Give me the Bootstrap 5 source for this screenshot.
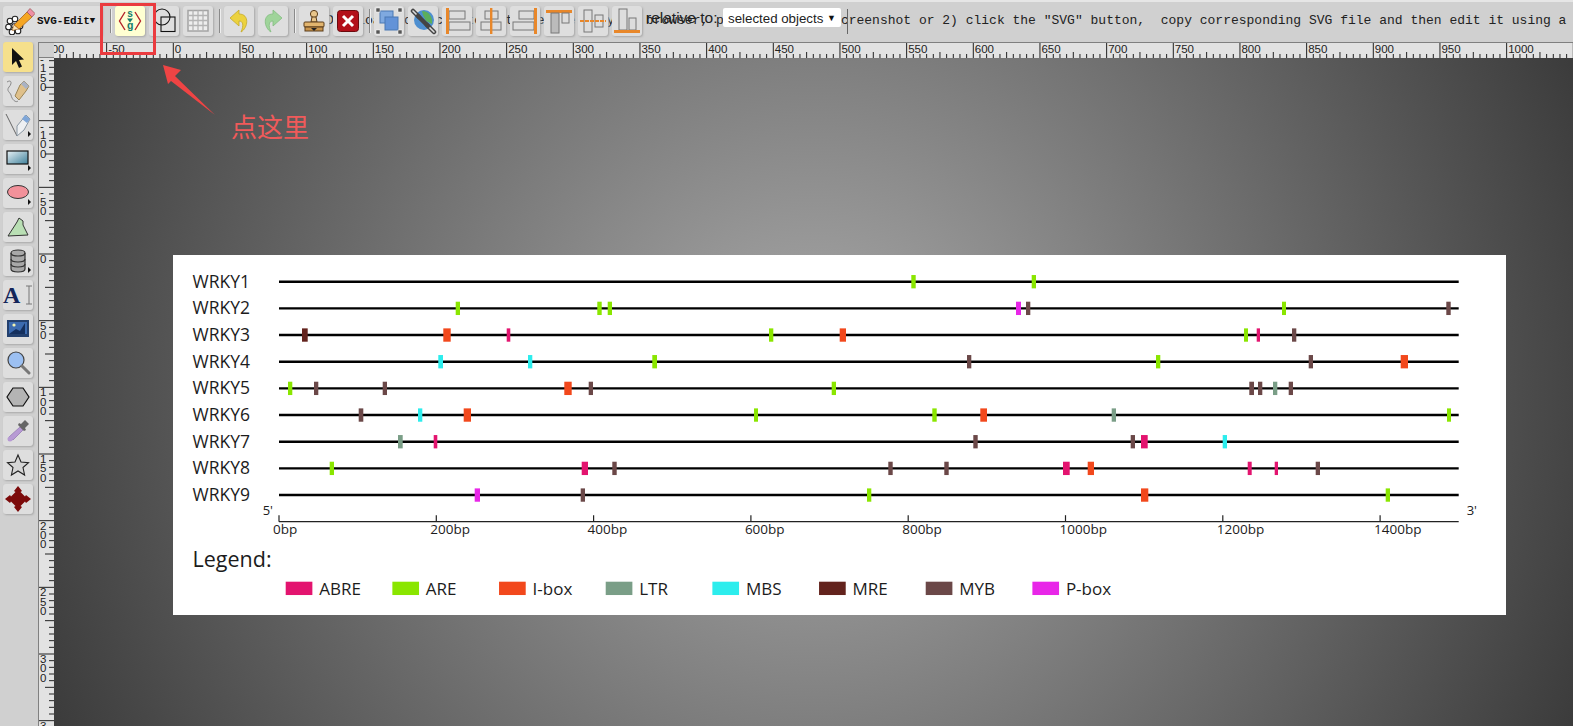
<!DOCTYPE html>
<html lang="en">

<head>
    <meta charset="UTF-8">
    <meta name="viewport" content="width=device-width, initial-scale=1.0">
    <title>SVG-Edit</title>
    <link href="https://cdn.jsdelivr.net/npm/bootstrap@5.3.0/dist/css/bootstrap.min.css" rel="stylesheet">
    <script src="https://cdn.jsdelivr.net/npm/bootstrap@5.3.0/dist/js/bootstrap.bundle.min.js"></script>
    <style>
        body {
            background: #d0d0d0;
            font-family: "Liberation Sans", sans-serif;
        }

        .editor-top {
            height: 42px;
            padding: 4px 0 0 3px;
            border-top: 2px solid #e6e6e6;
        }

        .behind-text {
            left: 326px;
            top: 11px;
            font: 13px/16px "Liberation Mono", monospace;
            color: #222;
            white-space: pre;
        }

        .text-caret {
            left: 847px;
            top: 7px;
            width: 1px;
            height: 25px;
            background: #666;
        }

        .tb-btn {
            width: 30px;
            height: 30px;
            flex: none;
            padding: 0;
            border: 0;
            border-radius: 3px;
            background: #dedede;
            box-shadow: 1px 1px 2px #a8a8a8;
            z-index: 1;
        }

        .tb-btn svg {
            display: block;
            margin: 0 auto;
        }

        .tb-logo {
            width: 99px;
            color: #111;
            font: bold 11px "Liberation Mono", monospace;
        }

        .tb-logo svg {
            margin: 0 2px 0 2px;
        }

        .tb-on-pale {
            background: #ffffd2;
        }

        .tb-on {
            background: #f6e08c;
        }

        .has-flyout::after {
            content: "";
            position: absolute;
            right: 2px;
            bottom: 3px;
            border-left: 3px solid #111;
            border-top: 3px solid transparent;
            border-bottom: 3px solid transparent;
        }

        .tb-sep {
            width: 1px;
            height: 24px;
            margin: 3px 0 0 2px;
            background: #8a8a8a;
            box-shadow: 1px 0 0 #eee;
            z-index: 1;
        }

        .tb-sep-first {
            margin-left: 4px;
        }

        .rel-label {
            width: 73px;
            margin-top: 5px;
            font-size: 15.5px;
            line-height: 14px;
            color: #222;
            white-space: nowrap;
            z-index: 1;
        }

        .rel-select {
            width: 118px;
            height: 19px;
            margin-top: 2px;
            padding: 0 5px;
            background: #fff;
            border-radius: 2px;
            font-size: 13.3px;
            line-height: 21px;
            color: #222;
            z-index: 1;
        }

        .rel-arrow {
            font-size: 9px;
            color: #111;
        }

        .tool-col {
            width: 38px;
            padding-left: 3px;
            gap: 4px;
        }

        .tool-letter {
            font: bold 24px/26px "Liberation Serif", serif;
            color: #14265a;
        }

        .corner-box {
            width: 16px;
            height: 16px;
            background: #d0d0d0;
            border-top: 1px solid #808080;
            border-left: 1px solid #808080;
            border-bottom: 1px solid #808080;
        }

        .ruler-h {
            height: 16px;
            background: #e2e2e2;
            border-top: 1px solid #808080;
        }

        .ruler-v {
            width: 16px;
            background: #e2e2e2;
            border-left: 1px solid #808080;
        }

        .ruler-h svg,
        .ruler-v svg {
            display: block;
        }

        .ruler-txt {
            font: 11.5px "Liberation Sans", sans-serif;
            fill: #222;
        }

        .work-canvas {
            background: radial-gradient(circle at 50% 50%, #acacac 0, #3a3a3a 840px);
            padding: 197px 0 0 119px;
        }

        .chart-sheet {
            width: 1333px;
            height: 360px;
            background: #fff;
        }

        .chart-sheet svg {
            display: block;
        }

        .chart-txt {
            font-family: "Open Sans", sans-serif;
            fill: #1c1c1c;
        }

        .note-box {
            left: 100px;
            top: 3px;
            width: 56px;
            height: 52px;
            border: 3px solid #ea3b3f;
            z-index: 5;
        }

        .note-arrow {
            left: 0;
            top: 0;
            z-index: 5;
        }

        .note-text {
            left: 231px;
            top: 109px;
            font: 26px/34px "Noto Sans CJK SC", sans-serif;
            color: #f05a5a;
            z-index: 5;
        }
    </style>
</head>

<body class="overflow-hidden">

    <div class="d-flex flex-column vh-100 position-relative">

        <!-- top toolbar -->
        <div class="editor-top d-flex gap-1 position-relative flex-shrink-0">
            <div class="behind-text position-absolute">Download to local to get the one in your browser, press 1) print screenshot or 2) click the "SVG" button,  copy corresponding SVG file and then edit it using a</div>
            <div class="text-caret position-absolute"></div>

            <button class="btn tb-btn tb-logo d-flex align-items-center position-relative">
                <svg width="30" height="28" viewBox="0 0 30 28">
                    <g fill="#fff" stroke="#222" stroke-width="1.1">
                        <circle cx="5" cy="14" r="2.8" />
                        <circle cx="3.5" cy="20" r="2.8" />
                        <circle cx="7" cy="25" r="2.8" />
                        <circle cx="13" cy="24" r="2.8" />
                        <circle cx="15" cy="19" r="2.8" />
                        <circle cx="10" cy="12" r="2.8" />
                        <circle cx="9" cy="19" r="2.2" />
                    </g>
                    <path d="M9 18 L22 5 L27 10 L14 22 Z" fill="#f5a623" stroke="#a8641e" stroke-width=".8" />
                    <path d="M22 5 L25 1.5 L30 6.5 L27 10 Z" fill="#ef8fa5" stroke="#a05a5a" stroke-width=".8" />
                    <path d="M9 18 L7 23.5 L14 22 Z" fill="#f9e2b5" stroke="#a8641e" stroke-width=".6" />
                </svg>
                <span>SVG-Edit</span><span class="rel-arrow">&#9660;</span>
            </button>
            <div class="tb-sep tb-sep-first"></div>

            <button class="btn tb-btn tb-on-pale position-relative">
                <svg width="30" height="30" viewBox="0 0 30 30">
                    <path d="M10 6 L4.5 15 L10 24 M20 6 L25.5 15 L20 24" fill="none" stroke="#b5232a" stroke-width="1.4" />
                    <text x="15" y="11" text-anchor="middle" font-size="10" font-weight="700" font-family="Liberation Mono" fill="#167d6c">s</text>
                    <path d="M12 12.5 H18 L15 16.5 Z" fill="#167d6c" />
                    <text x="15" y="23" text-anchor="middle" font-size="11" font-weight="700" font-family="Liberation Mono" fill="#167d6c">g</text>
                </svg>
            </button>
            <button class="btn tb-btn position-relative">
                <svg width="30" height="30" viewBox="0 0 30 30">
                    <circle cx="13" cy="11" r="8" fill="none" stroke="#111" stroke-width="1.1" />
                    <rect x="12" y="11" width="14" height="14.5" fill="none" stroke="#111" stroke-width="1.1" />
                </svg>
            </button>
            <button class="btn tb-btn position-relative">
                <svg width="30" height="30" viewBox="0 0 30 30">
                    <rect x="5" y="4.5" width="20" height="20.5" fill="#eee" stroke="#a4a4a4" stroke-width="1.5" />
                    <path d="M10 4.5 V25 M15 4.5 V25 M20 4.5 V25 M5 9.5 H25 M5 14.5 H25 M5 19.5 H25" stroke="#b4b4b4" stroke-width="1.3" />
                </svg>
            </button>
            <div class="tb-sep"></div>

            <button class="btn tb-btn position-relative">
                <svg width="26" height="26" viewBox="0 0 26 26">
                    <path d="M13 2 L4 10 L13 18 V13 C17 13 18 17 15 24 C22 20 24 6 13 6 Z" fill="#ecd23e" stroke="#c4a92a" stroke-width=".8" />
                </svg>
            </button>
            <button class="btn tb-btn position-relative">
                <svg width="26" height="26" viewBox="0 0 26 26">
                    <path d="M13 2 L22 10 L13 18 V13 C9 13 8 17 11 24 C4 20 2 6 13 6 Z" fill="#9fd49a" stroke="#84bd82" stroke-width=".8" />
                </svg>
            </button>
            <div class="tb-sep"></div>

            <button class="btn tb-btn position-relative">
                <svg width="26" height="26" viewBox="0 0 26 26">
                    <circle cx="13" cy="6" r="3.6" fill="#e8c58a" stroke="#5a3c1a" />
                    <path d="M11 9 H15 L16 14 H10 Z" fill="#e8c58a" stroke="#5a3c1a" />
                    <rect x="3" y="14" width="20" height="5" rx="1" fill="#e2b56e" stroke="#5a3c1a" />
                    <rect x="4" y="19" width="18" height="4" fill="#c9954d" stroke="#5a3c1a" />
                    <path d="M10 20 H16 L13 23 Z" fill="#222" />
                </svg>
            </button>
            <button class="btn tb-btn position-relative">
                <svg width="26" height="26" viewBox="0 0 26 26">
                    <rect x="2.5" y="2.5" width="21" height="21" rx="3" fill="#b3101a" stroke="#6b0a0e" />
                    <path d="M8 8 L18 18 M18 8 L8 18" stroke="#fff" stroke-width="3" />
                </svg>
            </button>
            <div class="tb-sep"></div>

            <button class="btn tb-btn position-relative">
                <svg width="28" height="28" viewBox="0 0 28 28">
                    <rect x="5" y="4" width="13" height="12" fill="#7fa9e0" stroke="#4a78b4" />
                    <rect x="10" y="10" width="13" height="13" fill="#6393d8" stroke="#4a78b4" />
                    <g fill="#555" stroke="#fff" stroke-width=".5">
                        <rect x="1" y="1" width="4" height="4" />
                        <rect x="23" y="1" width="4" height="4" />
                        <rect x="1" y="23" width="4" height="4" />
                        <rect x="23" y="23" width="4" height="4" />
                    </g>
                </svg>
            </button>
            <button class="btn tb-btn position-relative">
                <svg width="28" height="28" viewBox="0 0 28 28">
                    <circle cx="15" cy="13" r="10" fill="#4e8fd0" />
                    <path d="M13 4 C20 4 24 10 23 17 L17 14 L14 8 Z" fill="#5cae5c" />
                    <path d="M4 4 L10 10 M18 18 L25 25" stroke="#444" stroke-width="4.5" stroke-linecap="round" />
                    <path d="M4 4 L10 10 M18 18 L25 25" stroke="#ddd" stroke-width="1.6" stroke-linecap="round" />
                    <path d="M9 9 L19 19" stroke="#444" stroke-width="4.5" stroke-linecap="round" />
                </svg>
            </button>
            <button class="btn tb-btn position-relative">
                <svg width="28" height="28" viewBox="0 0 28 28">
                    <rect x="6" y="4" width="16" height="8" fill="#ddd" stroke="#777" />
                    <rect x="6" y="15" width="21" height="8" fill="#ddd" stroke="#777" />
                    <rect x="3" y="1" width="3" height="26" fill="#e8872a" />
                </svg>
            </button>
            <button class="btn tb-btn position-relative">
                <svg width="28" height="28" viewBox="0 0 28 28">
                    <rect x="8" y="4" width="13" height="8" fill="#ddd" stroke="#777" />
                    <rect x="4" y="15" width="20" height="8" fill="#ddd" stroke="#777" />
                    <rect x="13" y="1" width="2.4" height="26" fill="#e8872a" />
                </svg>
            </button>
            <button class="btn tb-btn position-relative">
                <svg width="28" height="28" viewBox="0 0 28 28">
                    <rect x="8" y="4" width="15" height="8" fill="#ddd" stroke="#777" />
                    <rect x="2" y="15" width="21" height="8" fill="#ddd" stroke="#777" />
                    <rect x="23" y="1" width="3" height="26" fill="#e8872a" />
                </svg>
            </button>
            <button class="btn tb-btn position-relative">
                <svg width="28" height="28" viewBox="0 0 28 28">
                    <rect x="1" y="3" width="26" height="3" fill="#e8872a" />
                    <rect x="6" y="6" width="8" height="20" fill="#bbb" stroke="#777" />
                    <rect x="17" y="6" width="7" height="10" fill="#ddd" stroke="#777" />
                </svg>
            </button>
            <button class="btn tb-btn position-relative">
                <svg width="28" height="28" viewBox="0 0 28 28">
                    <rect x="5" y="3" width="8" height="22" fill="#ddd" stroke="#777" />
                    <rect x="16" y="8" width="8" height="12" fill="#ddd" stroke="#777" />
                    <path d="M1 14 H27" stroke="#e8872a" stroke-width="2" stroke-dasharray="4 1" />
                </svg>
            </button>
            <button class="btn tb-btn position-relative">
                <svg width="28" height="28" viewBox="0 0 28 28">
                    <rect x="6" y="2" width="8" height="21" fill="#ddd" stroke="#777" />
                    <rect x="16" y="11" width="7" height="12" fill="#ddd" stroke="#777" />
                    <rect x="1" y="23" width="26" height="3" fill="#e8872a" />
                </svg>
            </button>

            <div class="rel-label position-relative">relative to:</div>
            <div class="rel-select d-flex justify-content-between position-relative">
                <span>selected objects</span><span class="rel-arrow">&#9660;</span>
            </div>
        </div>

        <div class="d-flex flex-grow-1 overflow-hidden">
            <!-- left tools -->
            <div class="tool-col d-flex flex-column flex-shrink-0">
                <button class="btn tb-btn tb-on">
                    <svg width="22" height="24" viewBox="0 0 22 24">
                        <path d="M5 3 V20 L9 16 L12 23 L15 21.5 L12 15 L17 14.5 Z" fill="#111" />
                    </svg>
                </button>
                <button class="btn tb-btn">
                    <svg width="28" height="28" viewBox="0 0 28 28">
                        <path d="M3 5 C8 2 8 7 5 10 C2 14 6 15 7 18 C8 23 12 26 14 24" fill="none" stroke="#888" />
                        <path d="M11 19 L16 8 L20 4 L25 9 L22 14 L15 23 Z" fill="#dfc08a" stroke="#9a8558" />
                        <path d="M17 7 L20 4 L25 9 L22 12 Z" fill="#a9b2c4" />
                    </svg>
                </button>
                <button class="btn tb-btn position-relative has-flyout">
                    <svg width="28" height="28" viewBox="0 0 28 28">
                        <path d="M2 3 L13 25" fill="none" stroke="#666" />
                        <path d="M13 25 L13 15 L22 4 L26 8 L20 19 Z" fill="#eef0f2" stroke="#8a97a3" />
                        <path d="M21 4 L26 8 L23 12 L18 8 Z" fill="#7ea6d8" />
                    </svg>
                </button>
                <button class="btn tb-btn position-relative has-flyout">
                    <svg width="24" height="22" viewBox="0 0 24 22">
                        <defs>
                            <linearGradient id="rectFill" x1="0" y1="0" x2="1" y2="1">
                                <stop offset="0" stop-color="#e9f2f6" />
                                <stop offset="1" stop-color="#3d7f99" />
                            </linearGradient>
                        </defs>
                        <rect x="1" y="3" width="21" height="13" fill="url(#rectFill)" stroke="#111" stroke-width="1.2" />
                    </svg>
                </button>
                <button class="btn tb-btn position-relative has-flyout">
                    <svg width="24" height="22" viewBox="0 0 24 22">
                        <ellipse cx="12" cy="10" rx="10.5" ry="6.5" fill="#f2919a" stroke="#333" />
                    </svg>
                </button>
                <button class="btn tb-btn">
                    <svg width="24" height="24" viewBox="0 0 24 24">
                        <path d="M2 21 L11 7 L13 3 L17 6 L17 10 L22 20 Z" fill="#b9dfb4" stroke="#333" />
                    </svg>
                </button>
                <button class="btn tb-btn position-relative has-flyout">
                    <svg width="24" height="26" viewBox="0 0 24 26">
                        <path d="M5 5 C5 1 19 1 19 5 V21 C19 25 5 25 5 21 Z" fill="#a8a8a8" stroke="#333" stroke-width="1.2" />
                        <path d="M5 5 C5 9 19 9 19 5 M5 11 C5 15 19 15 19 11 M5 16 C5 20 19 20 19 16" fill="none" stroke="#333" stroke-width="1.2" />
                    </svg>
                </button>
                <button class="btn tb-btn d-flex align-items-center justify-content-center gap-1">
                    <span class="tool-letter">A</span>
                    <svg width="6" height="20" viewBox="0 0 6 20">
                        <path d="M0 1 H6 M3 1 V19 M0 19 H6" stroke="#777" fill="none" />
                    </svg>
                </button>
                <button class="btn tb-btn">
                    <svg width="24" height="22" viewBox="0 0 24 22">
                        <rect x="1" y="2" width="22" height="17" fill="#23406e" />
                        <rect x="3" y="4" width="18" height="12" fill="#3c6bb0" />
                        <circle cx="8" cy="7" r="1.6" fill="#f2f2b0" />
                        <path d="M3 16 L10 11 L14 13 L19 5 L19 16 Z" fill="#15305e" />
                    </svg>
                </button>
                <button class="btn tb-btn">
                    <svg width="26" height="26" viewBox="0 0 26 26">
                        <circle cx="11" cy="10" r="8" fill="#9cc0f2" stroke="#444" stroke-width="1.2" />
                        <path d="M17 16 L24 23" stroke="#777" stroke-width="3" stroke-linecap="round" />
                    </svg>
                </button>
                <button class="btn tb-btn">
                    <svg width="24" height="24" viewBox="0 0 24 24">
                        <path d="M7 3 H17 L23 12 L17 21 H7 L1 12 Z" fill="#b4b4b4" stroke="#111" stroke-width="1.2" />
                    </svg>
                </button>
                <button class="btn tb-btn">
                    <svg width="24" height="24" viewBox="0 0 24 24">
                        <path d="M3 18 L14 8 L17 11 L7 21 Z" fill="#b79ad4" stroke="#a088bb" />
                        <circle cx="4" cy="20" r="2.5" fill="#b79ad4" />
                        <path d="M15 5 L19 1 L23 5 L19 9 L20 11 L18 12 L12 6 L13 4 Z" fill="#666" />
                    </svg>
                </button>
                <button class="btn tb-btn">
                    <svg width="24" height="24" viewBox="0 0 24 24">
                        <path d="M12 2 L15 9 L22.5 9.6 L17 14.5 L18.6 22 L12 18 L5.4 22 L7 14.5 L1.5 9.6 L9 9 Z" fill="#d6d6d6" stroke="#222" stroke-width="1.1" />
                    </svg>
                </button>
                <button class="btn tb-btn">
                    <svg width="26" height="26" viewBox="0 0 26 26">
                        <path d="M13 0 L17 5 L15.5 6 L20 10.5 L21 9 L26 13 L21 17 L20 15.5 L15.5 20 L17 21 L13 26 L9 21 L10.5 20 L6 15.5 L5 17 L0 13 L5 9 L6 10.5 L10.5 6 L9 5 Z" fill="#7c0a0a" />
                    </svg>
                </button>
            </div>

            <!-- rulers + canvas -->
            <div class="d-flex flex-column flex-grow-1 overflow-hidden">
                <div class="d-flex flex-shrink-0">
                    <div class="corner-box flex-shrink-0"></div>
                    <div class="ruler-h flex-grow-1 overflow-hidden" id="rulerTop"></div>
                </div>
                <div class="d-flex flex-grow-1 overflow-hidden">
                    <div class="ruler-v flex-shrink-0 overflow-hidden" id="rulerLeft"></div>
                    <div class="work-canvas flex-grow-1 overflow-hidden">
                        <div class="chart-sheet" id="chartSheet"></div>
                    </div>
                </div>
            </div>
        </div>

        <!-- red annotation on top of the screenshot -->
        <div class="note-box position-absolute"></div>
        <svg class="note-arrow position-absolute" width="230" height="125" viewBox="0 0 230 125">
            <path d="M163 65 L181 70 L175 76 L215 115 L171 81 L168 84 Z" fill="#ef4444" />
        </svg>
        <div class="note-text position-absolute">点这里</div>
    </div>

    <script>
        const SVGNS = "http://www.w3.org/2000/svg";

        function makeSvg(w, h) {
            const s = document.createElementNS(SVGNS, "svg");
            s.setAttribute("width", w);
            s.setAttribute("height", h);
            return s;
        }

        function add(parent, tag, attrs, text) {
            const el = document.createElementNS(SVGNS, tag);
            for (const k in attrs) el.setAttribute(k, attrs[k]);
            if (text !== undefined) el.textContent = text;
            parent.appendChild(el);
            return el;
        }

        // rulers: 50 units = 66.67px, unit 0 at page x 173.3 / y 254
        const MAJOR = 200 / 3;

        function drawTopRuler() {
            const s = makeSvg(1519, 15);
            for (let v = -100; v <= 1060; v += 5) {
                const x = 173.3 + v * MAJOR / 50 - 54;
                const big = v % 50 === 0;
                const mid = v % 25 === 0;
                const top = big ? 0 : mid ? 9 : 11;
                add(s, "line", { x1: x, x2: x, y1: top, y2: 15, stroke: "#222", "stroke-width": 1 });
                if (big) add(s, "text", { x: x + 1.5, y: 9.5, class: "ruler-txt" }, v);
            }
            document.getElementById("rulerTop").appendChild(s);
        }

        function drawLeftRuler() {
            const s = makeSvg(15, 668);
            for (let v = -150; v <= 360; v += 5) {
                const y = 254 + v * MAJOR / 50 - 58;
                const big = v % 50 === 0;
                const mid = v % 25 === 0;
                const left = big ? 0 : mid ? 6 : 10;
                add(s, "line", { x1: left, x2: 15, y1: y, y2: y, stroke: "#222", "stroke-width": 1 });
                if (big) {
                    String(v).split("").forEach((ch, i) => {
                        add(s, "text", { x: 1, y: y + 9 + i * 9.4, class: "ruler-txt" }, ch);
                    });
                }
            }
            document.getElementById("rulerLeft").appendChild(s);
        }

        // chart
        const COLORS = {
            ABRE: "#e3146f", ARE: "#8ae600", "I-box": "#f2481c", LTR: "#7a9e87",
            MBS: "#2ceded", MRE: "#63231d", MYB: "#6b4848", "P-box": "#e826e8"
        };

        // marks per gene: [left, right, element], page x coordinates
        const GENES = [
            [[911.3, 915.7, "ARE"], [1031.7, 1036, "ARE"]],
            [[455.7, 460, "ARE"], [597.3, 601.7, "ARE"], [607.7, 612, "ARE"], [1016, 1021, "P-box"], [1026, 1030.3, "MYB"], [1282, 1286, "ARE"], [1446.3, 1450.7, "MYB"]],
            [[302, 307.7, "MRE"], [443.3, 450.7, "I-box"], [506.7, 510.3, "ABRE"], [769, 773.3, "ARE"], [839.7, 846, "I-box"], [1244, 1248, "ARE"], [1256.7, 1260, "ABRE"], [1292, 1296.3, "MYB"]],
            [[438.3, 443, "MBS"], [528, 532.3, "MBS"], [652.3, 657, "ARE"], [967, 971.3, "MYB"], [1156, 1160.3, "ARE"], [1308.7, 1313, "MYB"], [1400.7, 1408, "I-box"]],
            [[288, 292.3, "ARE"], [314, 318.3, "MYB"], [382.7, 387, "MYB"], [564.3, 571.7, "I-box"], [588.7, 593, "MYB"], [831.7, 836, "ARE"], [1249.3, 1254, "MYB"], [1258, 1262.3, "MYB"], [1273, 1277.3, "LTR"], [1288.7, 1293, "MYB"]],
            [[358.7, 363.3, "MYB"], [418, 422.3, "MBS"], [463.7, 471, "I-box"], [754, 758, "ARE"], [932.3, 936.7, "ARE"], [980.3, 987, "I-box"], [1111.7, 1116, "LTR"], [1447, 1451, "ARE"]],
            [[398, 402.7, "LTR"], [433.7, 437.3, "ABRE"], [973.3, 977.7, "MYB"], [1130.7, 1135, "MYB"], [1141, 1147.7, "ABRE"], [1222.7, 1227, "MBS"]],
            [[329.7, 334, "ARE"], [581.7, 588, "ABRE"], [612.3, 616.7, "MYB"], [888.3, 892.7, "MYB"], [944.3, 948.7, "MYB"], [1063, 1069.7, "ABRE"], [1087.7, 1094, "I-box"], [1247.7, 1251.7, "ABRE"], [1274.7, 1278, "ABRE"], [1315.7, 1320, "MYB"]],
            [[474.7, 480, "P-box"], [580.7, 585, "MYB"], [867, 871.3, "ARE"], [1141, 1148.3, "I-box"], [1385.7, 1390, "ARE"]]
        ];

        function drawChart() {
            const s = makeSvg(1333, 360);
            const g = add(s, "g", { transform: "translate(-173,-255)" });
            const left = 279, right = 1458.7;
            GENES.forEach((marks, i) => {
                const y = 281.7 + i * 26.67;
                add(g, "text", { x: 192.5, y: y + 6, "font-size": 17.5, class: "chart-txt" }, "WRKY" + (i + 1));
                add(g, "line", { x1: left, x2: right, y1: y, y2: y, stroke: "#000", "stroke-width": 2.4 });
                marks.forEach(m => {
                    add(g, "rect", { x: m[0], y: y - 6.67, width: m[1] - m[0], height: 13.33, fill: COLORS[m[2]] });
                });
            });

            // axis
            const axisY = 521.7;
            add(g, "line", { x1: left, x2: right, y1: axisY, y2: axisY, stroke: "#222", "stroke-width": 1.2 });
            add(g, "text", { x: 262.7, y: 515, "font-size": 13, class: "chart-txt" }, "5'");
            add(g, "text", { x: 1466.7, y: 515, "font-size": 13, class: "chart-txt" }, "3'");
            for (let bp = 0; bp <= 1400; bp += 200) {
                const x = left + bp * 0.7865;
                add(g, "line", { x1: x, x2: x, y1: axisY - 6.5, y2: axisY, stroke: "#222", "stroke-width": 1.2 });
                add(g, "text", { x: x - 6, y: 534, "font-size": 13.5, class: "chart-txt" }, bp + "bp");
            }

            // legend
            add(g, "text", { x: 192.5, y: 566.7, "font-size": 21.5, class: "chart-txt" }, "Legend:");
            Object.keys(COLORS).forEach((name, i) => {
                const x = 285.7 + i * 106.67;
                add(g, "rect", { x: x, y: 581.7, width: 26.67, height: 13.33, fill: COLORS[name] });
                add(g, "text", { x: x + 33.5, y: 594.7, "font-size": 17, class: "chart-txt" }, name);
            });
            document.getElementById("chartSheet").appendChild(s);
        }

        drawTopRuler();
        drawLeftRuler();
        drawChart();
    </script>

</body>

</html>
